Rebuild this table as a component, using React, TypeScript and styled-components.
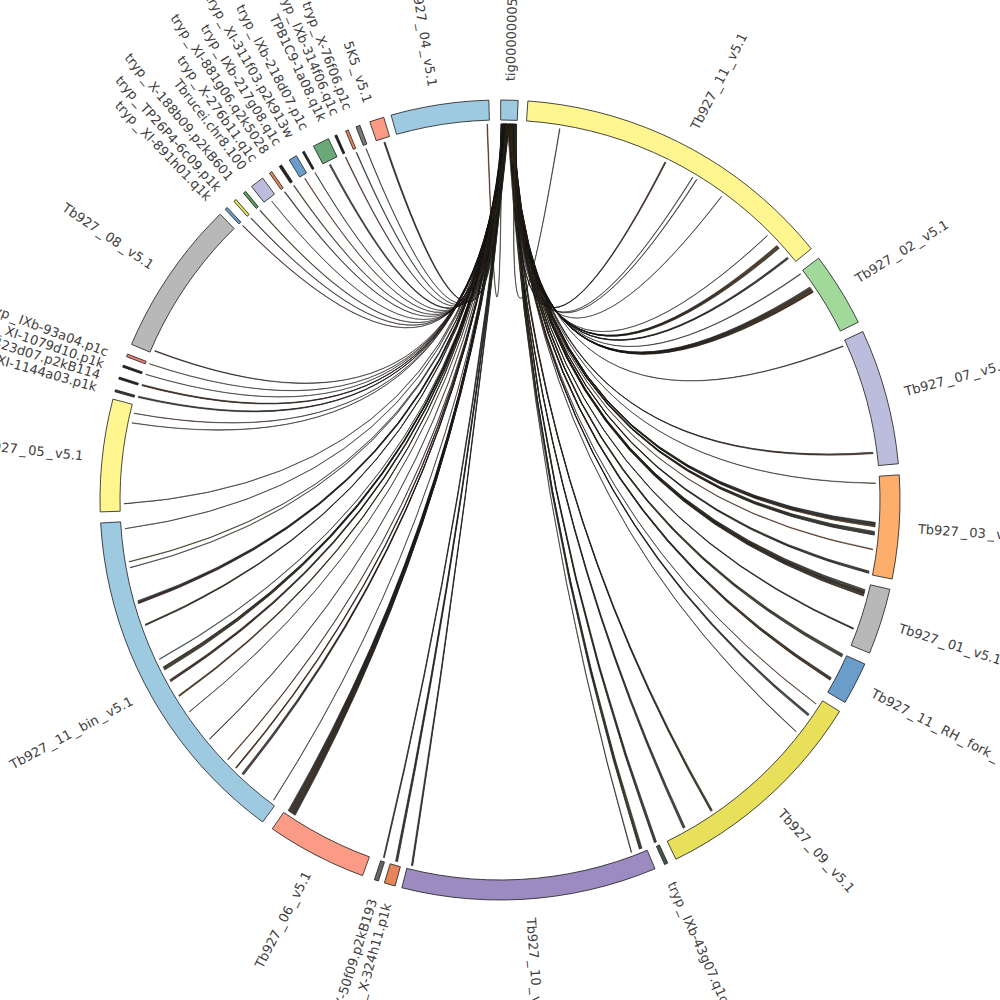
import React from "react";
import styled, { createGlobalStyle } from "styled-components";

const CX = 500;
const CY = 500;
const R_OUT = 400;
const R_IN = 380;
const R_LINK = 376;
const R_LABEL = 419;
const R_BEZIER = 30;

type Segment = {
	name: string;
	start: number;
	end: number;
	color: string;
	label?: number;
};

const segments: Segment[] = [
	{ name: "tig00000005", start: 0.1, end: 2.6, color: "#9ecae1" },
	{ name: "Tb927_11_v5.1", start: 4.0, end: 51.1, color: "#fff68f" },
	{ name: "Tb927_02_v5.1", start: 52.8, end: 63.6, color: "#a1d99b" },
	{ name: "Tb927_07_v5.1", start: 65.1, end: 84.8, color: "#bcbddc" },
	{ name: "Tb927_03_v5.1", start: 86.4, end: 101.4, color: "#fdae6b" },
	{ name: "Tb927_01_v5.1", start: 102.9, end: 112.5, color: "#b8b8b8" },
	{ name: "Tb927_11_RH_fork_v5.1", start: 114.2, end: 120.4, color: "#6b9dcb" },
	{ name: "Tb927_09_v5.1", start: 121.9, end: 153.9, color: "#e8e05a" },
	{ name: "tryp_IXb-43g07.q1c", start: 155.2, end: 155.7, color: "#3d5a4a", label: 155.8 },
	{ name: "Tb927_10_v5.1", start: 157.2, end: 194.2, color: "#9c8bc0" },
	{ name: "tryp_X-324h11.p1k", start: 195.2, end: 196.8, color: "#e8845a", label: 195.7 },
	{ name: "tryp_X-50f09.p2kB193", start: 197.7, end: 198.3, color: "#666666", label: 197.7 },
	{ name: "Tb927_06_v5.1", start: 200.1, end: 214.7, color: "#fb9a85" },
	{ name: "Tb927_11_bin_v5.1", start: 216.4, end: 266.7, color: "#9ecae1" },
	{ name: "Tb927_05_v5.1", start: 268.3, end: 284.6, color: "#fff68f", label: 276.1 },
	{ name: "tryp_XI-1144a03.p1k", start: 285.7, end: 286.0, color: "#2f3f3a", label: 285.7 },
	{ name: "tryp_X-423d07.p2kB114", start: 287.6, end: 287.9, color: "#222222", label: 287.4 },
	{ name: "tryp_XI-1079d10.p1k", start: 289.4, end: 289.7, color: "#222222", label: 289.0 },
	{ name: "tryp_IXb-93a04.p1c", start: 291.0, end: 291.4, color: "#f08070", label: 290.7 },
	{ name: "Tb927_08_v5.1", start: 292.9, end: 315.6, color: "#b8b8b8", label: 304.0 },
	{ name: "tryp_XI-891h01.q1k", start: 316.6, end: 317.0, color: "#6b9dcb", label: 316.1 },
	{ name: "tryp_TP26P4-6c09.p1k", start: 318.3, end: 318.7, color: "#e8e05a", label: 317.9 },
	{ name: "tryp_X-188b09.p2kB601", start: 320.1, end: 320.5, color: "#5aa05a", label: 320.1 },
	{ name: "Tbrucei.chr8.100", start: 321.6, end: 323.6, color: "#bcbddc", label: 322.4 },
	{ name: "tryp_X-276b11.q1c", start: 324.8, end: 325.2, color: "#e8845a", label: 324.2 },
	{ name: "tryp_XI-881g06.q2k5028", start: 326.5, end: 326.9, color: "#222222", label: 326.1 },
	{ name: "tryp_IXb-217g08.q1c", start: 328.2, end: 329.4, color: "#6b9dcb", label: 328.1 },
	{ name: "tryp_XI-311f03.p2k913w", start: 330.4, end: 330.7, color: "#222222", label: 330.1 },
	{ name: "tryp_IXb-218d07.p1c", start: 332.2, end: 334.6, color: "#6aaa78", label: 332.3 },
	{ name: "TPB1C9-1a08.q1k", start: 335.6, end: 335.9, color: "#222222", label: 335.0 },
	{ name: "tryp_IXb-314f06.q1c", start: 337.3, end: 337.7, color: "#e8845a", label: 336.9 },
	{ name: "tryp_X-76f06.p1c", start: 338.9, end: 339.5, color: "#777777", label: 338.8 },
	{ name: "5K5_v5.1", start: 341.0, end: 343.1, color: "#fb9a85", label: 341.7 },
	{ name: "Tb927_04_v5.1", start: 344.2, end: 358.4, color: "#9ecae1", label: 350.8 },
];

// target angle and how many links land there
const targets: [number, number][] = [
	[9.1, 1], [26.0, 2], [30.8, 1], [31.5, 1], [36.1, 1], [45.3, 1], [47.4, 5], [49.8, 3],
	[53.0, 1], [55.5, 5], [56.1, 3],
	[65.8, 1], [82.7, 2],
	[87.4, 1], [93.4, 6], [94.8, 5], [97.5, 1], [100.9, 3],
	[103.8, 5], [104.4, 4], [109.9, 2],
	[114.2, 4], [118.2, 4],
	[122.8, 1], [124.7, 3], [128.0, 1], [145.6, 3], [150.5, 3],
	[155.4, 3],
	[157.8, 4], [159.5, 1], [193.4, 2],
	[195.8, 3], [197.9, 2],
	[213.0, 11],
	[217.0, 1], [223.0, 3], [224.5, 2], [226.3, 1], [230.5, 1], [235.7, 1], [238.5, 2],
	[241.1, 3], [243.1, 5], [244.9, 1], [250.5, 2], [254.0, 4], [259.6, 1], [260.5, 1], [265.6, 1],
	[269.4, 1], [281.8, 1], [283.3, 1],
	[285.8, 2], [287.7, 2], [289.5, 1], [291.2, 1],
	[293.3, 1],
	[316.8, 1], [318.5, 1], [320.3, 1], [322.6, 1], [325.0, 1], [326.7, 1], [328.7, 1],
	[330.5, 1], [333.0, 2], [335.7, 1], [337.5, 1], [339.1, 1], [342.0, 2], [358.0, 1],
];

const ribbonColors = [
	"#7f2704", "#525252", "#5a5a1e", "#3b6e7e", "#8c510a", "#2d4d3a",
	"#6b3d5a", "#a63603", "#807a1e", "#35505f", "#4a2a1a",
];

const pt = (deg: number, r: number) => {
	const a = (deg * Math.PI) / 180;
	return [CX + r * Math.sin(a), CY - r * Math.cos(a)];
};

const f = (n: number) => n.toFixed(2);

const arcPts = (a0: number, a1: number, r: number) => {
	const steps = Math.max(1, Math.ceil(Math.abs(a1 - a0) / 2.5));
	const out: string[] = [];
	for (let i = 0; i <= steps; i++) {
		const [x, y] = pt(a0 + ((a1 - a0) * i) / steps, r);
		out.push(`${f(x)},${f(y)}`);
	}
	return out;
};

const segmentPath = (s: Segment) => {
	const outer = arcPts(s.start, s.end, R_OUT);
	const inner = arcPts(s.end, s.start, R_IN);
	return `M${outer.join(" L")} L${inner.join(" L")} Z`;
};

// control point sits on the bisector of the two ends, a little off centre
const controlFor = (a: number, b: number) => {
	const diff = (b - a + 360) % 360;
	const mid = diff <= 180 ? a + diff / 2 : a - (360 - diff) / 2;
	return pt(mid, R_BEZIER);
};

// small seeded generator so the links stay put between renders
const makeRand = (seed: number) => {
	let v = seed;
	return () => {
		v = (v * 1103515245 + 12345) % 2147483648;
		return v / 2147483648;
	};
};

const buildLinks = () => {
	const rand = makeRand(42);
	const ends: number[] = [];
	targets.forEach(([t, n]) => {
		for (let i = 0; i < n; i++) ends.push(t + i * 0.12);
	});
	// far targets start on the left of the contig, near ones on the right
	ends.sort((a, b) => b - a);
	const total = ends.length;
	return ends.map((t0, rank) => {
		let s0 = 0.2 + (rank / (total - 1)) * 2.2 + (rand() - 0.5) * 0.3;
		s0 = Math.min(2.45, Math.max(0.15, s0));
		const s1 = s0 + 0.03 + rand() * 0.1;
		const t1 = t0 + 0.04 + rand() * 0.08;
		const [ax, ay] = pt(s0, R_LINK);
		const [bx, by] = pt(s1, R_LINK);
		const [cx, cy] = pt(t0, R_LINK);
		const [dx, dy] = pt(t1, R_LINK);
		const [kx, ky] = controlFor(s0, t0);
		const d = `M${f(ax)},${f(ay)} Q${f(kx)},${f(ky)} ${f(dx)},${f(dy)} L${f(cx)},${f(cy)} Q${f(kx)},${f(ky)} ${f(bx)},${f(by)} Z`;
		return { d, color: ribbonColors[Math.floor(rand() * ribbonColors.length)] };
	});
};

const links = buildLinks();

const GlobalStyle = createGlobalStyle`
	html, body {
		margin: 0;
		padding: 0;
		background: #ffffff;
	}
`;

const Page = styled.div`
	width: 1000px;
	height: 1000px;
	background: #ffffff;
	overflow: hidden;
`;

const Chart = styled.svg`
	display: block;
`;

const Ideogram = styled.path<{ $fill: string }>`
	fill: ${(p) => p.$fill};
	stroke: #1a1a1a;
	stroke-width: 0.8;
`;

const Ribbon = styled.path<{ $fill: string }>`
	fill: ${(p) => p.$fill};
	stroke: #111111;
	stroke-width: 0.5;
	stroke-opacity: 0.9;
`;

const Label = styled.text`
	font-family: "DejaVu Sans", "Liberation Sans", sans-serif;
	font-size: 13px;
	fill: #404040;
`;

const SegmentLabel = ({ seg }: { seg: Segment }) => {
	const angle = seg.label ?? (seg.start + seg.end) / 2;
	const [x, y] = pt(angle, R_LABEL);
	const right = angle < 180;
	const rot = right ? angle - 90 : angle - 270;
	const parts = seg.name.split("_");
	return (
		<Label
			transform={`translate(${f(x)},${f(y)}) rotate(${f(rot)})`}
			textAnchor={right ? "start" : "end"}
			dominantBaseline='central'>
			{parts.map((part, i) => (
				<React.Fragment key={i}>
					{i > 0 && <tspan dx={2}>_</tspan>}
					<tspan dx={i > 0 ? 2 : 0}>{part}</tspan>
				</React.Fragment>
			))}
		</Label>
	);
};

const App = () => {
	return (
		<Page>
			<GlobalStyle />
			<Chart width={1000} height={1000} viewBox='0 0 1000 1000'>
				<g>
					{links.map((l, i) => (
						<Ribbon key={i} d={l.d} $fill={l.color} />
					))}
				</g>
				<g>
					{segments.map((s) => (
						<Ideogram key={s.name} d={segmentPath(s)} $fill={s.color} />
					))}
				</g>
				<g>
					{segments.map((s) => (
						<SegmentLabel key={s.name} seg={s} />
					))}
				</g>
			</Chart>
		</Page>
	);
};

export default App;
